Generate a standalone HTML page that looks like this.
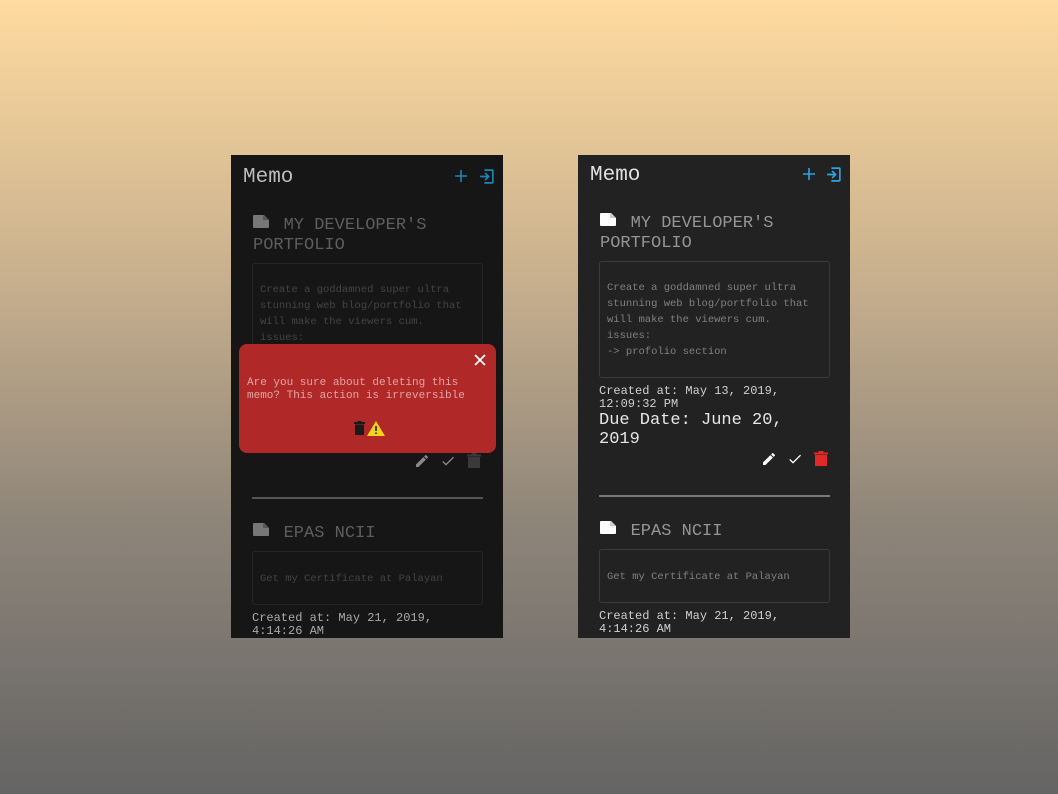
<!DOCTYPE html>
<html><head><meta charset="utf-8"><style>
*{margin:0;padding:0;box-sizing:border-box}
body{width:1058px;height:794px;overflow:hidden;background:linear-gradient(#ffdba0 0%,#c8b08e 35%,#8f867a 65%,#646464 100%);font-family:"Liberation Mono",monospace;position:relative}
.p{position:absolute;top:155px;width:272px;height:483px;overflow:hidden}
.a{position:absolute;white-space:nowrap}
.box{position:absolute;border:1px solid;border-radius:3px}
</style></head><body>

<!-- LEFT -->
<div class="p" style="left:231px;background:#161616">
 <div class="a" style="left:12px;top:11px;font-size:21px;color:#bdbdbd">Memo</div>
 <svg class="a" style="left:223px;top:14px" width="14" height="14" viewBox="0 0 14 14"><path d="M7 1v12M1 7h12" stroke="#1a87b8" stroke-width="1.6"/></svg>
 <svg class="a" style="left:247px;top:13px" width="17" height="17" viewBox="0 0 24 24"><path d="M10 17l5-5-5-5M15 12H3M9 3h11a1 1 0 011 1v16a1 1 0 01-1 1H9" fill="none" stroke="#1a87b8" stroke-width="2.3"/></svg>
 <svg class="a" style="left:22px;top:60px" width="16" height="13" viewBox="0 0 16 13"><path d="M1 0h10l5 5v7a1 1 0 01-1 1H1a1 1 0 01-1-1V1a1 1 0 011-1z" fill="#777"/><path d="M10 0v5h6" fill="#555"/></svg>
 <div class="a" style="left:22px;top:61px;font-size:17px;line-height:20px;color:#5e5e5e">&nbsp;&nbsp;&nbsp;MY DEVELOPER'S<br>PORTFOLIO</div>
 <div class="box" style="left:21px;top:108px;width:231px;height:117px;border-color:#262626"></div>
 <div class="a" style="left:29px;top:127px;font-size:10.5px;line-height:16px;color:#444">Create a goddamned super ultra<br>stunning web blog/portfolio that<br>will make the viewers cum.<br>issues:<br>-&gt; profolio section</div>
 <svg class="a" style="left:183px;top:298px" width="16" height="16" viewBox="0 0 24 24"><path d="M3 17.25V21h3.75L17.8 9.94l-3.75-3.75zM20.7 7.04a1 1 0 000-1.41l-2.34-2.34a1 1 0 00-1.41 0l-1.83 1.83 3.75 3.75z" fill="#8a8a8a"/></svg>
 <svg class="a" style="left:209px;top:298px" width="16" height="16" viewBox="0 0 24 24"><path d="M9 16.2L4.8 12l-1.4 1.4L9 19 21 7l-1.4-1.4z" fill="#8a8a8a"/></svg>
 <svg class="a" style="left:236px;top:298px" width="14" height="16" viewBox="0 0 14 16"><path d="M1 4h12v11H1zM0 1.5h14v2H0zM4.5 0h5v2h-5z" fill="#3a3a3a"/></svg>
 <div class="a" style="left:21px;top:342px;width:231px;height:2px;background:#555"></div>
 <svg class="a" style="left:22px;top:368px" width="16" height="13" viewBox="0 0 16 13"><path d="M1 0h10l5 5v7a1 1 0 01-1 1H1a1 1 0 01-1-1V1a1 1 0 011-1z" fill="#777"/><path d="M10 0v5h6" fill="#555"/></svg>
 <div class="a" style="left:22px;top:369px;font-size:17px;line-height:20px;color:#5e5e5e">&nbsp;&nbsp;&nbsp;EPAS NCII</div>
 <div class="box" style="left:21px;top:396px;width:231px;height:54px;border-color:#262626"></div>
 <div class="a" style="left:29px;top:416px;font-size:10.5px;line-height:16px;color:#444">Get my Certificate at Palayan</div>
 <div class="a" style="left:21px;top:457px;font-size:12px;line-height:13px;color:#aaa">Created at: May 21, 2019,<br>4:14:26 AM</div>
</div>
<div class="a" style="left:239px;top:344px;width:257px;height:109px;background:#b02828;border-radius:8px">
 <svg class="a" style="left:235px;top:10px" width="12" height="12" viewBox="0 0 12 12"><path d="M1 1l10 10M11 1L1 11" stroke="#fff" stroke-width="1.8"/></svg>
 <div class="a" style="left:8px;top:33px;font-size:11px;line-height:13px;color:#e3a5a5">Are you sure about deleting this<br>memo? This action is irreversible</div>
 <svg class="a" style="left:115px;top:77px" width="11" height="14" viewBox="0 0 11 14"><path d="M1 3.5h9V14H1zM0 1h11v2H0zM3.5 0h4v1.5h-4z" fill="#1a1a1a"/></svg>
 <svg class="a" style="left:128px;top:77px" width="18" height="15" viewBox="0 0 18 15"><path d="M9 0L18 15H0z" fill="#f3d21c"/><path d="M9 5v5M9 11.5v1.5" stroke="#222" stroke-width="1.6"/></svg>
</div>

<!-- RIGHT -->
<div class="p" style="left:578px;background:#222">
 <div class="a" style="left:12px;top:9px;font-size:21px;color:#e0e0e0">Memo</div>
 <svg class="a" style="left:224px;top:12px" width="14" height="14" viewBox="0 0 14 14"><path d="M7 1v12M1 7h12" stroke="#2aa6e3" stroke-width="1.6"/></svg>
 <svg class="a" style="left:247px;top:11px" width="17" height="17" viewBox="0 0 24 24"><path d="M10 17l5-5-5-5M15 12H3M9 3h11a1 1 0 011 1v16a1 1 0 01-1 1H9" fill="none" stroke="#2aa6e3" stroke-width="2.3"/></svg>
 <svg class="a" style="left:22px;top:58px" width="16" height="13" viewBox="0 0 16 13"><path d="M1 0h10l5 5v7a1 1 0 01-1 1H1a1 1 0 01-1-1V1a1 1 0 011-1z" fill="#fff"/><path d="M10 0v5h6" fill="#ccc"/></svg>
 <div class="a" style="left:22px;top:59px;font-size:17px;line-height:20px;color:#959595">&nbsp;&nbsp;&nbsp;MY DEVELOPER'S<br>PORTFOLIO</div>
 <div class="box" style="left:21px;top:106px;width:231px;height:117px;border-color:#3a3a3a"></div>
 <div class="a" style="left:29px;top:125px;font-size:10.5px;line-height:16px;color:#808080">Create a goddamned super ultra<br>stunning web blog/portfolio that<br>will make the viewers cum.<br>issues:<br>-&gt; profolio section</div>
 <div class="a" style="left:21px;top:230px;font-size:12px;line-height:13px;color:#d0d0d0">Created at: May 13, 2019,<br>12:09:32 PM</div>
 <div class="a" style="left:21px;top:256px;font-size:17px;line-height:19px;color:#e6e6e6">Due Date: June 20,<br>2019</div>
 <svg class="a" style="left:183px;top:296px" width="16" height="16" viewBox="0 0 24 24"><path d="M3 17.25V21h3.75L17.8 9.94l-3.75-3.75zM20.7 7.04a1 1 0 000-1.41l-2.34-2.34a1 1 0 00-1.41 0l-1.83 1.83 3.75 3.75z" fill="#fff"/></svg>
 <svg class="a" style="left:209px;top:296px" width="16" height="16" viewBox="0 0 24 24"><path d="M9 16.2L4.8 12l-1.4 1.4L9 19 21 7l-1.4-1.4z" fill="#fff"/></svg>
 <svg class="a" style="left:236px;top:296px" width="14" height="16" viewBox="0 0 14 16"><path d="M1 4h12v11H1zM0 1.5h14v2H0zM4.5 0h5v2h-5z" fill="#e02a2a"/></svg>
 <div class="a" style="left:21px;top:340px;width:231px;height:2px;background:#777"></div>
 <svg class="a" style="left:22px;top:366px" width="16" height="13" viewBox="0 0 16 13"><path d="M1 0h10l5 5v7a1 1 0 01-1 1H1a1 1 0 01-1-1V1a1 1 0 011-1z" fill="#fff"/><path d="M10 0v5h6" fill="#ccc"/></svg>
 <div class="a" style="left:22px;top:367px;font-size:17px;line-height:20px;color:#959595">&nbsp;&nbsp;&nbsp;EPAS NCII</div>
 <div class="box" style="left:21px;top:394px;width:231px;height:54px;border-color:#3a3a3a"></div>
 <div class="a" style="left:29px;top:414px;font-size:10.5px;line-height:16px;color:#808080">Get my Certificate at Palayan</div>
 <div class="a" style="left:21px;top:455px;font-size:12px;line-height:13px;color:#d0d0d0">Created at: May 21, 2019,<br>4:14:26 AM</div>
</div>
</body></html>
